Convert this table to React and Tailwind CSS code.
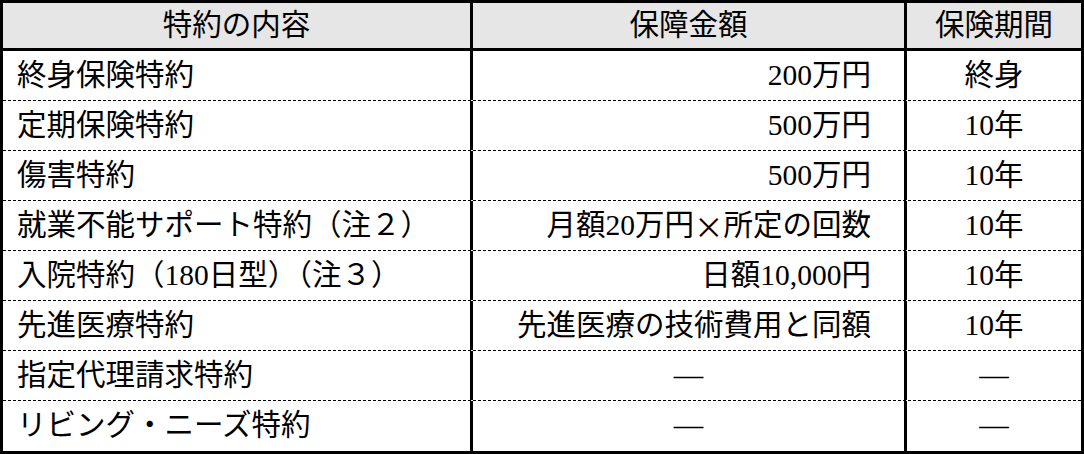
const rows = [
  { name: '終身保険特約', amount: '200万円', term: '終身' },
  { name: '定期保険特約', amount: '500万円', term: '10年' },
  { name: '傷害特約', amount: '500万円', term: '10年' },
  {
    name: '就業不能サポート特約（注２）',
    amount: (
      <>
        月額20万円<span className="font-['Noto_Sans_CJK_JP',sans-serif]">×</span>所定の回数
      </>
    ),
    term: '10年',
  },
  { name: '入院特約（180日型）（注３）', amount: '日額10,000円', term: '10年' },
  { name: '先進医療特約', amount: '先進医療の技術費用と同額', term: '10年' },
  { name: '指定代理請求特約', amount: null, term: null },
  { name: 'リビング・ニーズ特約', amount: null, term: null },
];

export default function App() {
  return (
    <div className="w-[1084px] h-[454px] bg-white font-['Liberation_Serif','Noto_Sans_CJK_JP',serif] text-[29.5px] leading-none text-black">
      <div className="box-border flex h-full w-full flex-col border-[3px] border-black">
        <div className="grid h-[48px] shrink-0 grid-cols-[470px_434px_1fr] border-b-[3px] border-black bg-[#e6e6e6]">
          <div className="flex items-center justify-center border-r-[3px] border-black">特約の内容</div>
          <div className="flex items-center justify-center border-r-[3px] border-black">保障金額</div>
          <div className="flex items-center justify-center">保険期間</div>
        </div>
        {rows.map((r, i) => (
          <div
            key={r.name}
            className={
              'grid h-[50px] shrink-0 grid-cols-[470px_434px_1fr] ' +
              (i < rows.length - 1 ? 'border-b border-dashed border-black' : '')
            }
          >
            <div className="flex items-center border-r-[3px] border-black pl-[14px]">{r.name}</div>
            {r.amount ? (
              <div className="flex items-center justify-end border-r-[3px] border-black pr-[33px]">{r.amount}</div>
            ) : (
              <div className="flex items-center justify-center border-r-[3px] border-black">―</div>
            )}
            <div className="flex items-center justify-center">{r.term ?? '―'}</div>
          </div>
        ))}
      </div>
    </div>
  );
}
